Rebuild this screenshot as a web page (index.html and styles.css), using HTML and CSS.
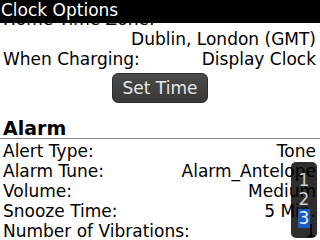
FILE: index.html
```html
<!DOCTYPE html>
<html>
<head>
<meta charset="utf-8">
<link rel="stylesheet" href="styles.css">
</head>
<body>
<div class="screen">
  <div class="content">
    <div class="row"><span>Home Time Zone:</span></div>
    <div class="row right"><span>Dublin, London (GMT)</span></div>
    <div class="row split"><span>When Charging:</span><span>Display Clock</span></div>
    <div class="btnrow"><button class="btn">Set Time</button></div>
    <div class="heading">Alarm</div>
    <div class="section">
      <div class="row split"><span>Alert Type:</span><span>Tone</span></div>
      <div class="row split"><span>Alarm Tune:</span><span>Alarm_Antelope</span></div>
      <div class="row split"><span>Volume:</span><span>Medium</span></div>
      <div class="row split"><span>Snooze Time:</span><span>5 Min.</span></div>
      <div class="row split"><span>Number of Vibrations:</span><span>1</span></div>
    </div>
  </div>
  <div class="titlebar">Clock Options</div>
  <div class="pager">
    <span class="num">1</span>
    <span class="num">2</span>
    <span class="num active">3</span>
  </div>
</div>
</body>
</html>
```
FILE: styles.css
```css
html, body {
  margin: 0;
  padding: 0;
  background: #fff;
}
.screen {
  position: relative;
  width: 320px;
  height: 240px;
  overflow: hidden;
  font-family: "DejaVu Sans", sans-serif;
  font-size: 17px;
  color: #000;
}
.content {
  padding: 9px 4px 0 3px;
}
.row {
  height: 20px;
  line-height: 20px;
  white-space: nowrap;
}
.right {
  text-align: right;
}
.split {
  display: flex;
  justify-content: space-between;
}
.btnrow {
  display: flex;
  justify-content: center;
  margin-top: 4px;
  padding-left: 1px;
}
.btn {
  width: 96px;
  height: 30px;
  border: 1px solid #2c2c2c;
  border-radius: 6px;
  background: linear-gradient(#4a4a4a, #383838);
  color: #e8e8e8;
  font-family: "DejaVu Sans", sans-serif;
  font-size: 17px;
  line-height: 28px;
  padding: 0;
}
.heading {
  margin: 16px -4px 0 -3px;
  padding-left: 3px;
  font-weight: bold;
  font-size: 19px;
  line-height: 19px;
  height: 19px;
  border-bottom: 1px solid #8a8a8a;
}
.section {
  margin-top: 2px;
}
.titlebar {
  position: absolute;
  top: 0;
  left: 0;
  right: 0;
  height: 23px;
  background: #000;
  color: #fff;
  font-size: 17px;
  line-height: 21px;
  padding-left: 1px;
}
.pager {
  position: absolute;
  left: 291px;
  top: 162px;
  width: 26px;
  height: 76px;
  border-radius: 5px;
  background: rgba(0, 0, 0, 0.82);
  display: flex;
  flex-direction: column;
  align-items: center;
  padding-top: 9px;
  box-sizing: border-box;
}
.num {
  display: block;
  width: 12px;
  height: 19px;
  line-height: 19px;
  text-align: center;
  color: #cfcfcf;
  font-size: 17px;
}
.num.active {
  background: #1c5cc0;
  color: #e8eef8;
}
```
